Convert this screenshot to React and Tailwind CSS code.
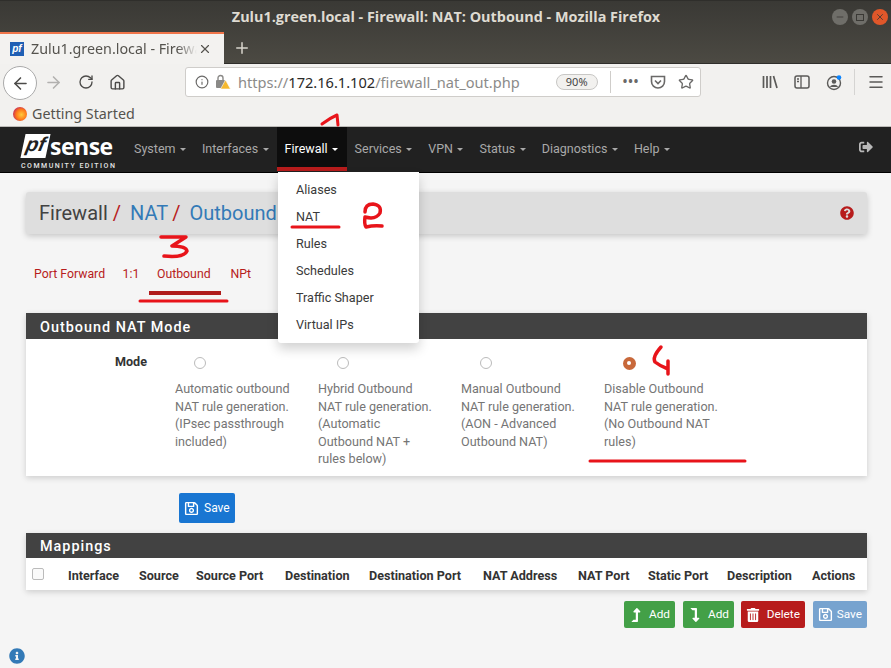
import { ArrowLeft, ArrowRight, RotateCw, Home, Info, Star, Minus, X, Plus, Menu } from 'lucide-react'
import { FaInfoCircle, FaQuestionCircle, FaLevelUpAlt, FaLevelDownAlt, FaTrashAlt, FaRegSave, FaSignOutAlt } from 'react-icons/fa'

const menus = ['System', 'Interfaces', 'Firewall', 'Services', 'VPN', 'Status', 'Diagnostics', 'Help']
const dropdown = ['Aliases', 'NAT', 'Rules', 'Schedules', 'Traffic Shaper', 'Virtual IPs']
const modes = [
  ['Automatic outbound', 'NAT rule generation.', '(IPsec passthrough', 'included)'],
  ['Hybrid Outbound', 'NAT rule generation.', '(Automatic', 'Outbound NAT +', 'rules below)'],
  ['Manual Outbound', 'NAT rule generation.', '(AON - Advanced', 'Outbound NAT)'],
  ['Disable Outbound', 'NAT rule generation.', '(No Outbound NAT', 'rules)'],
]
const columns = [
  ['Interface', 'w-[71px]'],
  ['Source', 'w-[57px]'],
  ['Source Port', 'w-[89px]'],
  ['Destination', 'w-[84px]'],
  ['Destination Port', 'w-[114px]'],
  ['NAT Address', 'w-[95px]'],
  ['NAT Port', 'w-[70px]'],
  ['Static Port', 'w-[79px]'],
  ['Description', 'w-[85px]'],
  ['Actions', 'w-[50px]'],
]

function Caret() {
  return <span className="ml-[4.5px] w-0 h-0 border-x-[3px] border-t-[3px] border-x-transparent border-t-current" />
}

function Browser() {
  return (
    <div className="font-['Noto_Sans',sans-serif]">
      <div className="h-[64px] bg-linear-to-b from-[#3a3935] to-[#4c4a43] border-t border-[#2f2e2b]">
        <div className="h-[31px] relative flex items-center justify-center">
          <span className="text-[14.4px] font-bold text-[#dfdbd2] font-['Open_Sans',sans-serif] ml-[1px]">Zulu1.green.local - Firewall: NAT: Outbound - Mozilla Firefox</span>
          <div className="absolute right-[3px] top-[8px] flex gap-[4px]">
            <div className="w-[16px] h-[16px] rounded-full bg-[#6f6e69] flex items-center justify-center"><Minus size={10} className="text-[#3a3935]" /></div>
            <div className="w-[16px] h-[16px] rounded-full bg-[#6f6e69] flex items-center justify-center"><div className="w-[8px] h-[7px] border border-[#3a3935]" /></div>
            <div className="w-[16px] h-[16px] rounded-full bg-[#e0572a] flex items-center justify-center"><X size={10} className="text-[#3a3935]" /></div>
          </div>
        </div>
        <div className="flex h-[32px]">
          <div className="w-[224px] bg-[#f3f2f0] border-t-2 border-[#f0754a] flex items-center pl-[10px] pr-[8px]">
            <div className="w-[14px] h-[14px] bg-[#1f5fb4] text-white text-[10px] font-bold italic leading-[13px] text-center font-['Liberation_Sans',sans-serif]">pf</div>
            <span className="ml-[7px] w-[166px] overflow-hidden whitespace-nowrap text-[14.3px] text-[#55534e] [mask-image:linear-gradient(to_right,black_88%,transparent)]">Zulu1.green.local - Firewall: NAT</span>
            <X size={14} className="text-[#55534e] ml-[1px]" />
          </div>
          <div className="flex-1 border-b border-[#2f2e2b] flex items-center pl-[9px]">
            <Plus size={18} className="text-[#d8d5cd]" />
          </div>
        </div>
      </div>
      <div className="h-[36px] bg-[#f2f1ef] flex items-center relative">
        <div className="ml-[3px] w-[34px] h-[34px] mt-[2px] rounded-full border border-[#aaa] bg-white flex items-center justify-center z-10">
          <ArrowLeft size={19} className="text-[#4c4b49]" />
        </div>
        <ArrowRight size={19} className="ml-[7px] text-[#b2b1af]" />
        <RotateCw size={16} className="ml-[15px] text-[#4c4b49]" />
        <Home size={17} className="ml-[15px] text-[#4c4b49]" />
        <div className="ml-[59px] w-[516px] h-[30px] bg-white border border-[#cfcdca] rounded-[3px] flex items-center pl-[9px] text-[14.6px]">
          <Info size={14} className="text-[#6a6968]" />
          <svg width="16" height="16" viewBox="0 0 16 16" className="ml-[6px]">
            <rect x="1" y="6" width="9" height="8" rx="1" fill="#8a8987" />
            <path d="M3 6V4a2.5 2.5 0 0 1 5 0v2" fill="none" stroke="#8a8987" strokeWidth="1.4" />
            <path d="M10.500 6 L15.500 15 H5.500 Z" fill="#f5b82e" stroke="#fff" strokeWidth=".6" />
          </svg>
          <span className="ml-[7px] pt-[1px] text-[#8c8b89] whitespace-nowrap">https://<span className="text-[#2b2a29]">172.16.1.102</span>/firewall_nat_out.php</span>
          <span className="ml-[36px] w-[42px] h-[16px] rounded-full border border-[#c8c7c5] bg-[#f2f1ef] text-[11px] leading-[14px] text-center text-[#444]">90%</span>
          <div className="ml-[12px] w-px h-[22px] bg-[#cfcdca]" />
          <span className="ml-[12px] w-[16px] text-[#6a6968] text-[12px] font-bold tracking-[1px] leading-none">•••</span>
          <svg width="16" height="16" viewBox="0 0 16 16" className="ml-[11px]">
            <path d="M1.500 2.500h13v5a6.500 6.500 0 0 1-13 0z" fill="none" stroke="#6a6968" strokeWidth="1.600" />
            <path d="M5 6.500l3 3 3-3" fill="none" stroke="#6a6968" strokeWidth="1.600" />
          </svg>
          <Star size={16} className="ml-[12px] text-[#6a6968]" strokeWidth={2} />
        </div>
        <div className="ml-[61px] flex items-center">
          <svg width="16" height="16" viewBox="0 0 16 16">
            <path d="M1.500 2v12M5 2v12M8.500 2v12M11.500 2l3.500 12" fill="none" stroke="#5b5a58" strokeWidth="1.700" />
          </svg>
          <svg width="16" height="14" viewBox="0 0 16 14" className="ml-[16px]">
            <rect x="1" y="1" width="14" height="12" rx="2" fill="none" stroke="#5b5a58" strokeWidth="1.500" />
            <path d="M7 1v12M3 4h2M3 6.500h2" stroke="#5b5a58" strokeWidth="1.300" />
          </svg>
          <svg width="17" height="17" viewBox="0 0 17 17" className="ml-[16px]">
            <circle cx="8" cy="9" r="6.500" fill="none" stroke="#5b5a58" strokeWidth="1.400" />
            <circle cx="8" cy="7.500" r="2.300" fill="#5b5a58" />
            <path d="M4 13c1-3 7-3 8 0" fill="#5b5a58" />
            <circle cx="13" cy="3.500" r="2.300" fill="#0a84ff" />
          </svg>
          <div className="ml-[11px] w-px h-[26px] bg-[#d5d4d2]" />
          <Menu size={18} className="ml-[12px] text-[#5b5a58]" />
        </div>
      </div>
      <div className="h-[27px] bg-[#f2f1ef] border-b border-[#bdbbb8] flex items-center pl-[13px] pt-[2px]">
        <div className="w-[14px] h-[14px] rounded-full bg-[radial-gradient(circle_at_60%_55%,#ffcb3d_0%,#ff7a1a_45%,#c2245e_80%,#5a2a9c_100%)]" />
        <span className="ml-[5px] text-[14.3px] text-[#55534e]">Getting Started</span>
      </div>
    </div>
  )
}

function Navbar() {
  return (
    <div className="h-[46px] bg-[#212121] border-b border-black flex items-center relative font-['Roboto',sans-serif]">
      <div className="ml-[21px] w-[97px] h-full relative text-white">
        <div className="mt-[6px] flex items-center h-[26px]">
          <div className="ml-[2px] w-[25px] h-[24px] bg-white text-[#212121] -skew-x-12 text-[20px] leading-[21px] font-bold italic text-center font-['Liberation_Sans',sans-serif]">pf</div>
          <span className="ml-[2px] text-[23px] font-bold leading-none tracking-[-0.5px] font-['Open_Sans',sans-serif]">sense</span>
        </div>
        <div className="text-[7px] tracking-[1.5px] font-medium leading-none mt-[4px] whitespace-nowrap text-[#e4e4e4]">COMMUNITY EDITION</div>
      </div>
      <div className="ml-[8px] flex h-full">
        {menus.map((m) =>
          m === 'Firewall' ? (
            <div key={m} className="w-[70px] h-[44px] bg-[#0d0d0d] shadow-[inset_0_-4px_0_#b71c1c] flex items-center pl-[8px] text-[12.5px] text-white">
              {m}<Caret />
            </div>
          ) : (
            <div key={m} className="h-[44px] px-[8px] flex items-center text-[12.5px] text-[#a9a9a9]">
              {m}<Caret />
            </div>
          )
        )}
      </div>
      <FaSignOutAlt size={14} className="absolute right-[18px] top-[13px] text-[#b8b8b8]" />
      <div className="absolute left-[278px] top-[45px] w-[141px] h-[171px] bg-white rounded-b-[3px] shadow-[0_6px_12px_rgba(0,0,0,0.18)] pt-[5px] z-20">
        {dropdown.map((d) => (
          <div key={d} className="h-[27px] pl-[18px] flex items-center text-[12.6px] text-[#3a3a3a]">{d}</div>
        ))}
      </div>
    </div>
  )
}

function PanelHeading({ height, children }) {
  return (
    <div className={`${height} bg-[#424242] text-white text-[14.4px] font-medium tracking-[1px] pl-[14px] pt-[3px] flex items-center`}>{children}</div>
  )
}

function ActionButton({ icon, label, color }) {
  return (
    <div className={`h-[27px] rounded-[2px] ${color} justify-between flex items-center px-[5px] text-white text-[11.8px]`}>
      {icon}<span>{label}</span>
    </div>
  )
}

export default function App() {
  return (
    <div className="w-[891px] h-[668px] overflow-hidden relative bg-[#f5f5f5] font-['Roboto',sans-serif]">
      <Browser />
      <Navbar />

      <main className="pl-[26px] pr-[24px] text-[#333]">
        <div className="mt-[19px] h-[42px] bg-[#dedede] rounded-[3px] shadow-[0_2px_6px_rgba(0,0,0,0.2)] flex items-center pl-[13px] pr-[13px] text-[20px]">
          <span className="text-[#424242]">Firewall</span>
          <span className="text-[#b71c1c] ml-[5px]">/</span>
          <span className="text-[#337ab7] ml-[9px]">NAT</span>
          <span className="text-[#b71c1c] ml-[4px]">/</span>
          <span className="text-[#337ab7] ml-[9px]">Outbound</span>
          <FaQuestionCircle size={14} className="ml-auto text-[#b71c1c]" />
        </div>

        <div className="mt-[26px] h-[35px] flex gap-[1.5px] text-[12.3px] text-[#b71c1c]">
          <div className="px-[8px] pt-[5px]">Port Forward</div>
          <div className="px-[8px] pt-[5px]">1:1</div>
          <div className="px-[8px] pt-[5px] border-b-4 border-[#b01c1c] w-[72px]">Outbound</div>
          <div className="px-[8px] pt-[5px]">NPt</div>
        </div>

        <section className="mt-[18px] shadow-[0_2px_6px_rgba(0,0,0,0.16)] bg-white">
          <PanelHeading height="h-[26px]">Outbound NAT Mode</PanelHeading>
          <div className="h-[137px] flex">
            <div className="w-[121px] pt-[15px] text-right text-[12.6px] font-bold leading-[16px] text-[#333]">Mode</div>
            <div className="ml-[28px] flex">
              {modes.map((lines, i) => (
                <div key={i} className="w-[143px]">
                  <div className="ml-[19px] mt-[18px] w-[12px] h-[12px] rounded-full flex items-center justify-center">
                    {i === 3 ? (
                      <div className="shrink-0 w-[13px] h-[13px] rounded-full bg-[#c8683a] flex items-center justify-center"><div className="w-[4px] h-[4px] rounded-full bg-white" /></div>
                    ) : (
                      <div className="w-[12px] h-[12px] rounded-full border border-[#bbb] bg-white" />
                    )}
                  </div>
                  <div className="mt-[11px] text-[12.6px] leading-[17.6px] text-[#757575] whitespace-nowrap">
                    {lines.map((l) => <div key={l}>{l}</div>)}
                  </div>
                </div>
              ))}
            </div>
          </div>
        </section>

        <div className="mt-[17px] ml-[153px] w-[56px] h-[30px] bg-[#1976d2] rounded-[2px] flex items-center pl-[5px] text-white text-[12px]">
          <FaRegSave size={15} />
          <span className="ml-[5px]">Save</span>
        </div>

        <section className="mt-[10px] shadow-[0_2px_6px_rgba(0,0,0,0.16)] bg-white">
          <PanelHeading height="h-[25px]">Mappings</PanelHeading>
          <div className="h-[32px] pt-[4px] flex items-center text-[12.6px] font-bold text-[#333] whitespace-nowrap">
            <div className="w-[42px] pl-[6px]">
              <div className="w-[12px] h-[12px] rounded-[2px] border border-[#bbb] bg-[#fafafa] -mt-[4px]" />
            </div>
            {columns.map(([name, w]) => <div key={name} className={w}>{name}</div>)}
          </div>
        </section>

        <div className="mt-[11px] flex justify-end text-white">
          <div className="w-[51px]"><ActionButton icon={<FaLevelUpAlt size={14} />} label="Add" color="bg-[#43a047]" /></div>
          <div className="w-[51px] ml-[8px]"><ActionButton icon={<FaLevelDownAlt size={14} />} label="Add" color="bg-[#43a047]" /></div>
          <div className="w-[64px] ml-[7px]"><ActionButton icon={<FaTrashAlt size={14} />} label="Delete" color="bg-[#b71c1c]" /></div>
          <div className="w-[54px] ml-[8px]"><ActionButton icon={<FaRegSave size={15} />} label="Save" color="bg-[#77a3cf]" /></div>
        </div>
      </main>

      <FaInfoCircle size={16} className="absolute left-[9px] top-[648px] text-[#337ab7]" />

      {/* red marks drawn over the screenshot */}
      <svg width="891" height="668" className="absolute left-0 top-0 pointer-events-none z-30" fill="none" stroke="#e8141a" strokeLinecap="round" strokeLinejoin="round">
        <path d="M322 124 Q330 118 337 115 L338 125" strokeWidth="3" />
        <path d="M365 212 Q365 204 373 204 Q382 205 380 213 Q376 220 365 217 Q364 224 366 227 Q374 225 382 226" strokeWidth="3.500" />
        <path d="M292 227 H339" strokeWidth="3" />
        <path d="M161 237 H186 L172 246 Q186 246 187 251 Q184 258 164 256" strokeWidth="3.500" />
        <path d="M140 301 H227" strokeWidth="3" />
        <path d="M661 347 Q652 357 655 362 Q660 366 668 369 M668 361 V374" strokeWidth="3.500" />
        <path d="M590 461 H745" strokeWidth="3" />
      </svg>
    </div>
  )
}
